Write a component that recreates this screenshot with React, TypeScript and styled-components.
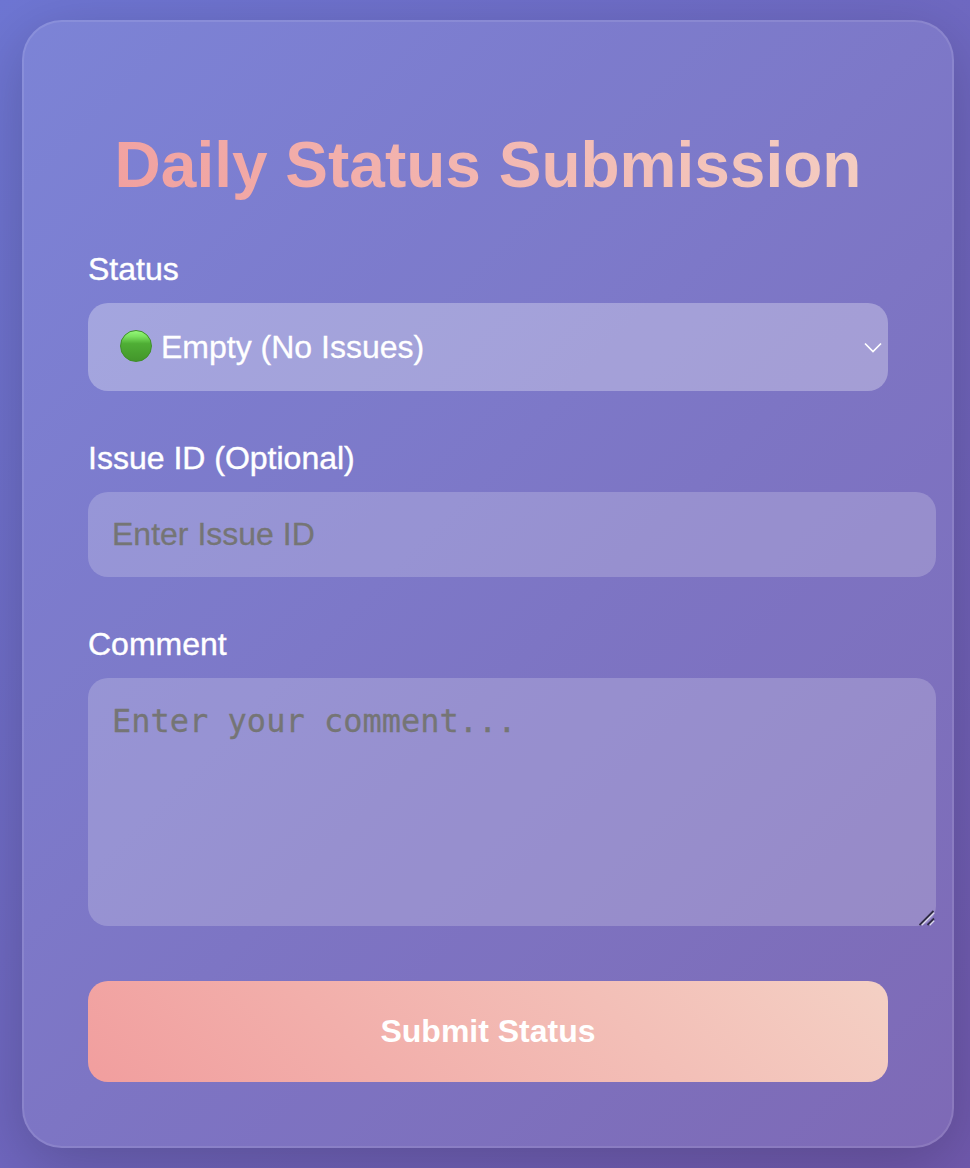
import React, { useState } from "react";
import styled, { createGlobalStyle } from "styled-components";

interface FieldProps {
  label: string;
  htmlFor: string;
  children: React.ReactNode;
}

const Field: React.FC<FieldProps> = ({ label, htmlFor, children }) => {
  return (
    <FieldGroup>
      <StyledLabel htmlFor={htmlFor}>{label}</StyledLabel>
      {children}
    </FieldGroup>
  );
};

const App: React.FC = () => {
  const [issueId, setIssueId] = useState("");
  const [comment, setComment] = useState("");

  return (
    <>
      <GlobalStyle />
      <Page>
        <Card onSubmit={(e) => e.preventDefault()}>
          <Title>
            <TitleText>Daily Status Submission</TitleText>
          </Title>
          <Field label="Status" htmlFor="status">
            <StatusSelect id="status" type="button">
              <StatusDot />
              <StatusText>Empty (No Issues)</StatusText>
              <Chevron viewBox="0 0 18 12">
                <path d="M1 1.5 L9 9.5 L17 1.5" />
              </Chevron>
            </StatusSelect>
          </Field>
          <Field label="Issue ID (Optional)" htmlFor="issueId">
            <StyledInput
              id="issueId"
              placeholder="Enter Issue ID"
              value={issueId}
              onChange={(e) => setIssueId(e.target.value)}
            />
          </Field>
          <Field label="Comment" htmlFor="comment">
            <TextareaWrap>
              <StyledTextarea
                id="comment"
                placeholder="Enter your comment..."
                value={comment}
                onChange={(e) => setComment(e.target.value)}
              />
              <ResizeGrip viewBox="0 0 16 16">
                <path d="M2.5 15 L15 2.5 M10.5 15 L15 10.5" stroke="#dcd9ee" />
                <path d="M0.5 15 L14.5 1 M8.5 15 L15 8.5" stroke="#302c44" />
              </ResizeGrip>
            </TextareaWrap>
          </Field>
          <SubmitButton type="submit">Submit Status</SubmitButton>
        </Card>
      </Page>
    </>
  );
};

export default App;

// styled-component
const GlobalStyle = createGlobalStyle`
  * {
    box-sizing: border-box;
  }
  body {
    margin: 0;
    font-family: "Liberation Sans", Arial, sans-serif;
  }
`;

const Page = styled.div`
  width: 970px;
  height: 1168px;
  padding: 20px 16px 20px 22px;
  overflow: hidden;
  background: linear-gradient(135deg, #6e76d3 0%, #7059ad 100%);
`;

const Card = styled.form`
  display: flex;
  flex-direction: column;
  width: 932px;
  height: 1128px;
  padding: 106px 64px 64px;
  border: 2px solid rgba(255, 255, 255, 0.1);
  border-radius: 40px;
  background: rgba(255, 255, 255, 0.1);
  box-shadow: 0 16px 64px rgba(0, 0, 0, 0.2);
`;

const Title = styled.h1`
  margin: 0 0 49px;
  font-size: 64px;
  line-height: 74px;
  text-align: center;
  white-space: nowrap;
`;

const TitleText = styled.span`
  display: block;
  color: transparent;
  background: linear-gradient(45deg, #f19e9e, #f4d0c4);
  background-clip: text;
  -webkit-background-clip: text;
`;

const FieldGroup = styled.div`
  display: flex;
  flex-direction: column;
  margin-bottom: 49px;
`;

const StyledLabel = styled.label`
  margin-bottom: 15px;
  color: white;
  font-size: 32px;
  line-height: 37px;
  -webkit-text-stroke: 0.4px white;
`;

const StatusSelect = styled.button`
  display: flex;
  align-items: center;
  height: 88px;
  padding: 0 6px 0 32px;
  border: none;
  border-radius: 20px;
  background: rgba(255, 255, 255, 0.3);
  color: white;
  font-family: inherit;
  font-size: 32px;
  text-align: left;
`;

const StatusDot = styled.span`
  width: 32px;
  height: 32px;
  margin: 0 9px 2px 0;
  border: 1.5px solid #3f8f29;
  border-radius: 50%;
  background: linear-gradient(#94f878 0%, #7be25f 18%, #4fae35 42%, #43962b 100%);
`;

const StatusText = styled.span`
  flex: 1;
  -webkit-text-stroke: 0.3px white;
`;

const Chevron = styled.svg`
  width: 18px;
  height: 12px;
  margin-top: 1px;
  fill: none;
  stroke: white;
  stroke-width: 1.7;
`;

const StyledInput = styled.input`
  width: 848px;
  height: 85px;
  padding: 24px;
  border: none;
  border-radius: 20px;
  outline: none;
  background: rgba(255, 255, 255, 0.2);
  color: white;
  font-family: inherit;
  font-size: 32px;
  &::placeholder {
    color: #757575;
    -webkit-text-stroke: 0.3px #757575;
  }
`;

const TextareaWrap = styled.div`
  position: relative;
  width: 848px;
  height: 248px;
`;

const StyledTextarea = styled.textarea`
  display: block;
  width: 100%;
  height: 100%;
  padding: 24px;
  border: none;
  border-radius: 20px;
  outline: none;
  resize: none;
  background: rgba(255, 255, 255, 0.2);
  color: white;
  font-family: "DejaVu Sans Mono", monospace;
  font-size: 32px;
  &::placeholder {
    color: #757575;
    -webkit-text-stroke: 0.3px #757575;
  }
`;

const ResizeGrip = styled.svg`
  position: absolute;
  right: 1px;
  bottom: 0;
  width: 16px;
  height: 16px;
  fill: none;
  stroke-width: 1.8;
  pointer-events: none;
`;

const SubmitButton = styled.button`
  height: 101px;
  margin-top: 6px;
  border: none;
  border-radius: 20px;
  background: linear-gradient(45deg, #f19e9e, #f4d0c4);
  color: white;
  font-family: inherit;
  font-size: 32px;
  font-weight: bold;
`;
